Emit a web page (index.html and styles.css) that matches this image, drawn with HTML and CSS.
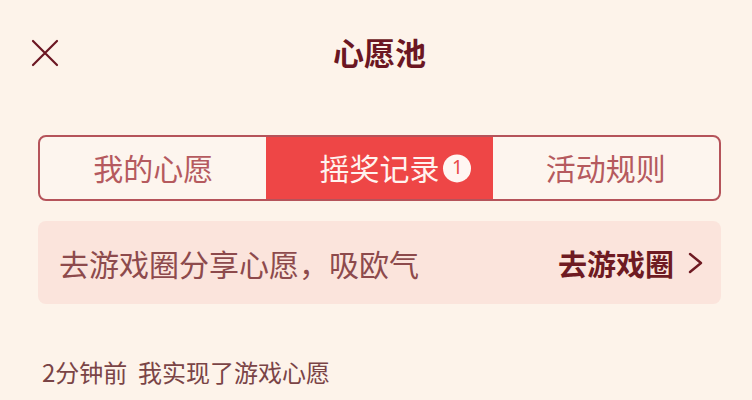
FILE: index.html
```html
<!DOCTYPE html>
<html lang="zh">
<head>
<meta charset="utf-8">
<link rel="stylesheet" href="styles.css">
</head>
<body>
<div class="page">
  <header class="header">
    <svg class="close" viewBox="0 0 28 28" width="28" height="28">
      <path d="M2 2 L26 26 M26 2 L2 26" stroke="#6b1622" stroke-width="2.2" fill="none" stroke-linecap="round"/>
    </svg>
    <div class="title">心愿池</div>
  </header>
  <div class="tabs">
    <div class="tab"><span class="label">我的心愿</span></div>
    <div class="tab active"><span class="label">摇奖记录<span class="badge">1</span></span></div>
    <div class="tab"><span class="label">活动规则</span></div>
  </div>
  <div class="banner">
    <span class="banner-text">去游戏圈分享心愿，吸欧气</span>
    <span class="banner-link">去游戏圈
      <svg class="chev" viewBox="0 0 18 24" width="18" height="24">
        <path d="M4 3 L15 12 L4 21" stroke="#6e1a22" stroke-width="2.4" fill="none" stroke-linecap="round" stroke-linejoin="round"/>
      </svg>
    </span>
  </div>
  <div class="feed">2分钟前&nbsp;&nbsp;我实现了游戏心愿</div>
</div>
</body>
</html>
```
FILE: styles.css
```css
html, body {
  margin: 0;
  padding: 0;
  background: #fdf3ea;
}
body {
  font-family: "Noto Sans CJK SC", "Noto Sans", sans-serif;
  width: 752px;
  height: 400px;
  overflow: hidden;
}
.page {
  padding: 0 31px 0 38px;
}
.header {
  position: relative;
  height: 106px;
  display: flex;
  align-items: center;
  justify-content: center;
}
.close {
  position: absolute;
  left: -7px;
  top: 39px;
}
.title {
  font-size: 31px;
  font-weight: 700;
  color: #6b1622;
  margin-top: -3px;
}
.tabs {
  margin-top: 29px;
  height: 62px;
  display: flex;
  border: 2px solid #b5535a;
  border-radius: 8px;
  overflow: hidden;
  background: #fdf5ee;
}
.tab {
  flex: 1;
  display: flex;
  align-items: center;
  justify-content: center;
  font-size: 30px;
  color: #b55a5e;
  padding-bottom: 3px;
}
.label {
  position: relative;
}
.tab.active {
  background: #ee4646;
  color: #fff3ef;
}
.badge {
  position: absolute;
  left: calc(100% + 4px);
  top: 50%;
  transform: translateY(-45%);
  display: flex;
  align-items: center;
  justify-content: center;
  width: 28px;
  height: 28px;
  border-radius: 50%;
  background: #fff6f2;
  color: #e84848;
  font-size: 19px;
  line-height: 1;
  font-family: "Noto Sans", sans-serif;
}
.banner {
  margin-top: 20px;
  height: 83px;
  border-radius: 8px;
  background: #fbe4dc;
  display: flex;
  align-items: center;
  justify-content: space-between;
  padding: 0 17px 0 21px;
}
.banner-text {
  font-size: 30px;
  color: #8d4a4c;
}
.banner-link {
  display: flex;
  align-items: center;
  font-size: 29px;
  font-weight: 700;
  color: #6e1a22;
}
.chev {
  margin-left: 12px;
}
.feed {
  margin-top: 50px;
  margin-left: 4px;
  font-size: 24px;
  color: #7a4446;
}
```
